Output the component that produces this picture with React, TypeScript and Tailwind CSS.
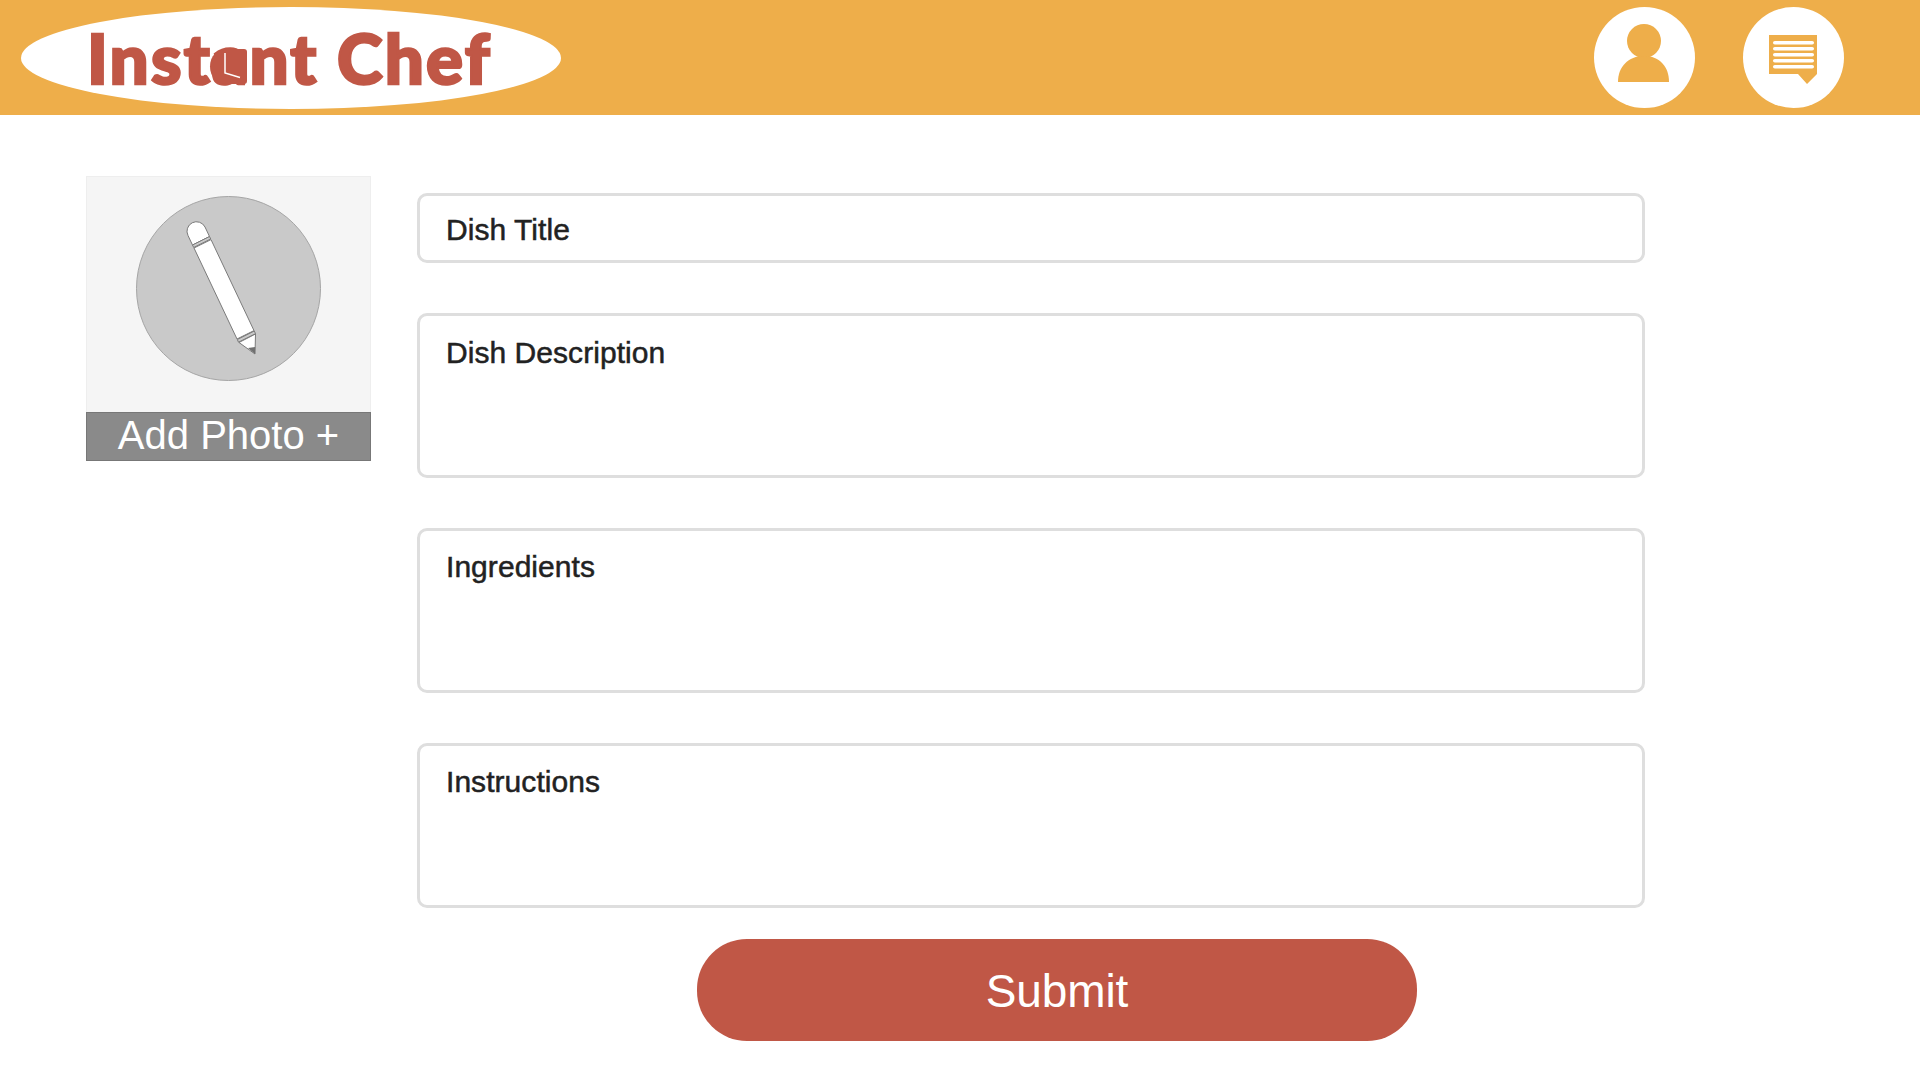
import React from "react";

const fields = [
  { label: "Dish Description", offset: "pt-[19px]" },
  { label: "Ingredients", offset: "pt-[18px]" },
  { label: "Instructions", offset: "pt-[18px]" },
];

const UserIcon = () => (
  <svg width="101" height="101" viewBox="0 0 101 101">
    <circle cx="50" cy="34" r="17" fill="#eeae4a" />
    <path d="M24 75 C24 60 34 49 50 49 C66 49 75 60 75 75 Z" fill="#eeae4a" />
  </svg>
);

const ChatIcon = () => (
  <svg width="101" height="101" viewBox="0 0 101 101">
    <path d="M26 28 H74 V67 L64 77 L55 67 H26 Z" fill="#eeae4a" />
    {[34, 40, 46, 52, 58].map((y) => (
      <rect key={y} x="30" y={y} width="41" height="3.6" rx="1.8" fill="#fff" />
    ))}
  </svg>
);

const PencilIcon = () => (
  <svg width="185" height="185" viewBox="0 0 185 185">
    <g stroke="#7a7a7a" strokeWidth="1" fill="#fff" strokeLinejoin="round">
      <path d="M56.5 49 L52 39.5 A9.5 9.5 0 0 1 69 31 L73.5 40.5 Z" />
      <path d="M56.5 49 L73.5 40.5 L74.7 43 L57.7 51.5 Z" fill="#c9c9c9" />
      <path d="M58 52 L75 43.6 L118 134.6 L101 143 Z" />
      <path d="M101.3 143.5 L118.3 135 L119.5 137.7 L102.5 146.2 Z" fill="#c9c9c9" />
      <path d="M103 146.5 L119.5 138 L119 158 Z" />
    </g>
    <path d="M112 152 L119.2 151 L119 158 Z" fill="#6f6f6f" />
  </svg>
);

export default function App() {
  return (
    <div className="min-h-[1080px] bg-white font-['Liberation_Sans',Arial,sans-serif]">
      <header className="flex h-[115px] items-center bg-[#eeae4a] pl-[21px]">
        <div className="relative flex h-[102px] w-[540px] items-center rounded-[50%] bg-white pl-[66px]">
          <span className="font-['Lato',sans-serif] text-[69px] leading-none font-black tracking-[2.2px] whitespace-nowrap text-[#c05746] [-webkit-text-stroke:2.5px_#c05746]">
            Instant Chef
          </span>
          {/* the a of the logo is a clock face */}
          <svg className="absolute top-[41px] left-[187px]" width="42" height="38" viewBox="0 0 42 38">
            <path d="M20 1 H36 a3 3 0 0 1 3 3 V33 a3 3 0 0 1 -3 3 H20 C9 36 2 29 2 18.500 C2 8 9 1 20 1 Z" fill="#c05746" />
            <path d="M17 5 V25 L32 29.500" fill="none" stroke="#fff" strokeWidth="1.500" />
          </svg>
        </div>
        <div className="mr-[76px] ml-auto flex gap-[48px]">
          <div className="h-[101px] w-[101px] rounded-full bg-white">
            <UserIcon />
          </div>
          <div className="h-[101px] w-[101px] rounded-full bg-white">
            <ChatIcon />
          </div>
        </div>
      </header>

      <main className="flex pl-[86px]">
        <div className="mt-[61px] h-[285px] w-[285px] shrink-0">
          <div className="flex h-[236px] justify-center border border-b-0 border-[#eeeeee] bg-[#f5f5f5] pt-[19px]">
            <div className="h-[185px] w-[185px] rounded-full border border-[#a5a5a5] bg-[#c9c9c9]">
              <div className="-m-px">
                <PencilIcon />
              </div>
            </div>
          </div>
          <div className="flex h-[49px] items-center justify-center border border-[#777777] bg-[#8a8a8a] pb-[4px] text-[40px] leading-none text-white">
            Add Photo +
          </div>
        </div>

        <div className="ml-[46px] w-[1228px] pt-[78px]">
          <div className="flex h-[70px] items-center rounded-[10px] border-[3px] border-[#dedede] px-[26px] pt-[3px] text-[30px] tracking-[0.05px] text-[#222222] [-webkit-text-stroke:0.5px_#222222]">
            Dish Title
          </div>
          <div className="mt-[50px] flex flex-col gap-[50px]">
            {fields.map((field) => (
              <div
                key={field.label}
                className={`h-[165px] rounded-[10px] border-[3px] border-[#dedede] px-[26px] ${field.offset} text-[30px] leading-[36px] tracking-[0.05px] text-[#222222] [-webkit-text-stroke:0.5px_#222222]`}
              >
                {field.label}
              </div>
            ))}
          </div>
          <button className="mt-[31px] ml-[280px] flex h-[102px] w-[720px] items-center justify-center rounded-[50px] bg-[#c05746] pt-[2px] text-[46px] tracking-[-0.1px] text-white">
            Submit
          </button>
        </div>
      </main>
    </div>
  );
}
